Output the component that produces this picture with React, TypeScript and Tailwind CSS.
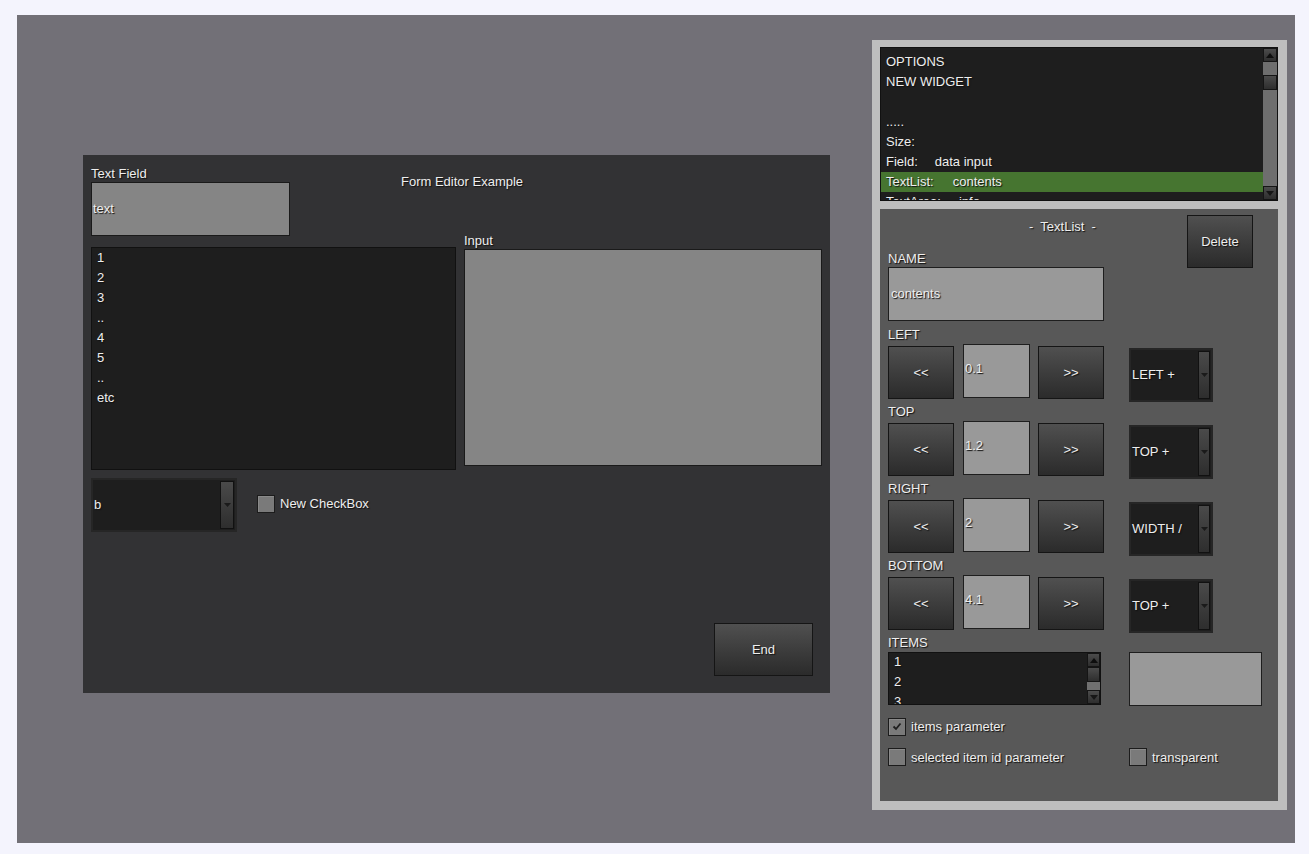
import React from "react";

const shadow = "[text-shadow:1px_1px_1px_#111]";

function Btn({ label, className }: { label: string; className: string }) {
  return (
    <div
      className={`flex items-center justify-center border border-[#151515] bg-linear-to-b from-[#505050] to-[#2b2b2b] text-[13px] text-[#eeeeee] ${shadow} ${className}`}
    >
      {label}
    </div>
  );
}

function ArrowBtn({ dir, className }: { dir: "up" | "down"; className: string }) {
  return (
    <div
      className={`flex items-center justify-center border border-[#151515] bg-linear-to-b from-[#4c4c4c] to-[#2e2e2e] ${className}`}
    >
      <svg width="8" height="5" viewBox="0 0 8 5">
        {dir === "up" ? (
          <path d="M0 5 L4 0 L8 5 Z" fill="#0e0e0e" />
        ) : (
          <path d="M0 0 L8 0 L4 5 Z" fill="#161616" />
        )}
      </svg>
    </div>
  );
}

function Dropdown({ text, wide }: { text: string; wide?: boolean }) {
  return (
    <div
      className={`flex border-2 border-[#262626] bg-[#1e1e1e] ${wide ? "h-[54px] w-[146px]" : "h-[54px] w-[84px]"}`}
    >
      <div className={`flex flex-1 items-center pl-px text-[13px] text-[#eeeeee] ${shadow}`}>{text}</div>
      <div
        className={`my-px mr-px flex items-center justify-center border border-[#111] bg-linear-to-b from-[#4a4a4a] to-[#2e2e2e] ${wide ? "w-[14px]" : "w-[12px]"}`}
      >
        <svg width="7" height="4" viewBox="0 0 7 4">
          <path d="M0 0 L7 0 L3.5 4 Z" fill="#1a1a1a" />
        </svg>
      </div>
    </div>
  );
}

function CheckBox({ checked }: { checked?: boolean }) {
  return (
    <div className="flex h-[18px] w-[18px] items-center justify-center border border-[#1c1c1c] bg-[#7a7a7a] shadow-[inset_1px_1px_0_#8a8a8a]">
      {checked && (
        <svg width="10" height="9" viewBox="0 0 10 9">
          <path d="M1.5 4.5 L4 7 L8.5 1.5" stroke="#1e1e1e" strokeWidth="1.8" fill="none" />
        </svg>
      )}
    </div>
  );
}

function ValueBox({ value }: { value: string }) {
  return (
    <div
      className={`h-[54px] w-[67px] border border-[#1e1e1e] bg-[#999999] pl-px pt-[16px] text-[13px] leading-4 text-[#eeeeee] ${shadow}`}
    >
      {value}
    </div>
  );
}

function Label({ text }: { text: string }) {
  return <div className={`h-4 leading-[18px] text-[13px] text-[#eeeeee] ${shadow}`}>{text}</div>;
}

function PositionRow({ label, value, mode }: { label: string; value: string; mode: string }) {
  return (
    <div className="flex h-[77px] flex-col">
      <Label text={label} />
      <div className="mt-[2px] flex items-start">
        <Btn label="<<" className="mt-[2px] h-[53px] w-[66px]" />
        <div className="ml-[9px]">
          <ValueBox value={value} />
        </div>
        <Btn label=">>" className="ml-[8px] mt-[2px] h-[53px] w-[66px]" />
        <div className="ml-[25px] mt-[4px]">
          <Dropdown text={mode} />
        </div>
      </div>
    </div>
  );
}

const options: { name: string; value?: string; gap?: string; selected?: boolean }[] = [
  { name: "OPTIONS" },
  { name: "NEW WIDGET" },
  { name: "" },
  { name: "....." },
  { name: "Size:" },
  { name: "Field:", value: "data input", gap: "ml-[17px]" },
  { name: "TextList:", value: "contents", gap: "ml-[19px]", selected: true },
  { name: "TextArea:", value: "info", gap: "ml-[18px]" },
];

const listItems = ["1", "2", "3", "..", "4", "5", "..", "etc"];

export default function App() {
  return (
    <div className="min-h-[854px] bg-[#f4f4fd] pt-[15px] font-['Liberation_Sans',Arial,sans-serif]">
      <div className="ml-[17px] flex h-[828px] w-[1278px] items-start bg-[#727077]">
        {/* form preview */}
        <div className="ml-[66px] mt-[140px] flex h-[538px] w-[747px] flex-col bg-[#323234] pl-2 pt-[10px]">
          <div className="flex">
            <div className="flex flex-col">
              <Label text="Text Field" />
              <div
                className={`mt-px flex h-[54px] w-[199px] items-center border border-[#1a1a1a] bg-[#858585] pl-px text-[13px] text-[#eeeeee] ${shadow}`}
              >
                text
              </div>
            </div>
            <div className={`ml-[111px] mt-[8px] h-4 leading-[18px] text-[13px] text-[#eeeeee] ${shadow}`}>
              Form Editor Example
            </div>
          </div>

          <div className="mt-[11px] flex items-start">
            <div className="h-[223px] w-[365px] overflow-hidden border border-[#111] bg-[#1e1e1e] pl-[5px]">
              {listItems.map((it, i) => (
                <div key={i} className={`h-5 leading-[19px] text-[13px] text-[#eeeeee] ${shadow}`}>
                  {it}
                </div>
              ))}
            </div>
            <div className="-mt-[15px] ml-2 flex flex-col">
              <Label text="Input" />
              <div className="mt-px h-[217px] w-[358px] border border-[#1a1a1a] bg-[#858585]" />
            </div>
          </div>

          <div className="mt-[8px] flex items-center">
            <Dropdown text="b" wide />
            <div className="ml-[20px] -mt-[2px]">
              <CheckBox />
            </div>
            <div className={`ml-[5px] -mt-[2px] text-[13px] text-[#eeeeee] ${shadow}`}>New CheckBox</div>
          </div>

          <div className="mt-[91px] flex justify-end pr-[17px]">
            <Btn label="End" className="h-[53px] w-[99px]" />
          </div>
        </div>

        {/* editor side panel */}
        <div className="ml-[42px] mt-[25px] flex h-[770px] w-[415px] flex-col bg-[#bebebe] pl-2 pt-[7px]">
          <div className="flex h-[154px] w-[398px] border border-[#111] bg-[#1e1e1e]">
            <div className="flex-1 overflow-hidden pt-[4px]">
              {options.map((o, i) => (
                <div
                  key={i}
                  className={`flex h-5 items-center pl-[5px] text-[13px] text-[#eeeeee] ${shadow} ${o.selected ? "bg-[#467530]" : ""}`}
                >
                  <span>{o.name}</span>
                  {o.value && <span className={o.gap}>{o.value}</span>}
                </div>
              ))}
            </div>
            <div className="flex w-[14px] flex-col bg-[#6e6e6e]">
              <ArrowBtn dir="up" className="h-[14px] w-[14px]" />
              <div className="mt-[13px] h-[15px] w-[14px] border border-[#151515] bg-linear-to-b from-[#4c4c4c] to-[#2e2e2e]" />
              <div className="flex-1" />
              <ArrowBtn dir="down" className="h-[14px] w-[14px]" />
            </div>
          </div>

          <div className="mt-[8px] flex h-[592px] w-[398px] flex-col bg-[#585858] pl-2">
            <div className="flex">
              <div className="flex flex-col">
                <div className={`mt-[9px] h-4 whitespace-pre pl-[141px] leading-[18px] text-[13px] text-[#eeeeee] ${shadow}`}>
                  {"-  TextList  -"}
                </div>
                <div className="mt-[16px]">
                  <Label text="NAME" />
                </div>
                <div
                  className={`mt-px flex h-[54px] w-[216px] items-center border border-[#1e1e1e] bg-[#999999] pl-[2px] text-[13px] text-[#eeeeee] ${shadow}`}
                >
                  contents
                </div>
              </div>
              <Btn label="Delete" className="ml-[83px] mt-[6px] h-[53px] w-[66px]" />
            </div>

            <div className="mt-[5px] flex flex-col">
              <PositionRow label="LEFT" value="0.1" mode="LEFT +" />
              <PositionRow label="TOP" value="1.2" mode="TOP +" />
              <PositionRow label="RIGHT" value="2" mode="WIDTH /" />
              <PositionRow label="BOTTOM" value="4.1" mode="TOP +" />
            </div>

            <Label text="ITEMS" />
            <div className="mt-[2px] flex items-start">
              <div className="flex h-[53px] w-[213px] border border-[#111] bg-[#1e1e1e]">
                <div className="-mt-[1px] flex-1 overflow-hidden pl-[5px]">
                  {["1", "2", "3"].map((it) => (
                    <div key={it} className={`h-5 leading-5 text-[13px] text-[#eeeeee] ${shadow}`}>
                      {it}
                    </div>
                  ))}
                </div>
                <div className="flex w-[13px] flex-col bg-[#585858]">
                  <ArrowBtn dir="up" className="h-[14px] w-[13px]" />
                  <div className="h-[15px] w-[13px] border border-[#151515] bg-linear-to-b from-[#4c4c4c] to-[#2e2e2e]" />
                  <div className="flex-1 bg-[#707070]" />
                  <ArrowBtn dir="down" className="h-[14px] w-[13px]" />
                </div>
              </div>
              <div className="ml-[28px] h-[54px] w-[133px] border border-[#1e1e1e] bg-[#999999]" />
            </div>

            <div className="mt-[11px] flex items-center">
              <CheckBox checked />
              <div className={`ml-[5px] text-[13px] text-[#eeeeee] ${shadow}`}>items parameter</div>
            </div>
            <div className="mt-[11px] flex items-center">
              <div className="flex w-[241px] items-center">
                <CheckBox />
                <div className={`ml-[5px] text-[13px] text-[#eeeeee] ${shadow}`}>selected item id parameter</div>
              </div>
              <CheckBox />
              <div className={`ml-[5px] text-[13px] text-[#eeeeee] ${shadow}`}>transparent</div>
            </div>
          </div>
        </div>
      </div>
    </div>
  );
}
